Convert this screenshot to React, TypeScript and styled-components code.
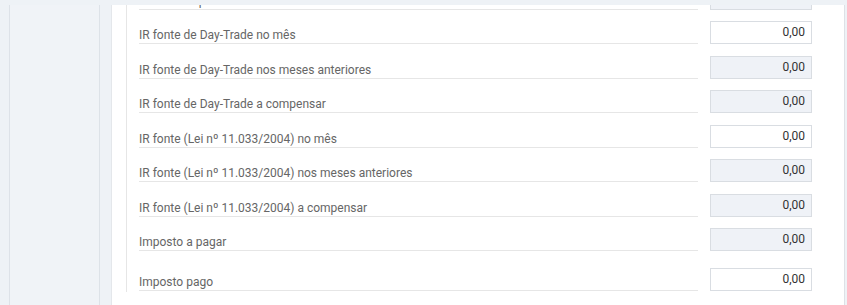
import React from 'react'
import { createGlobalStyle, styled } from 'styled-components'

const GlobalStyle = createGlobalStyle`
  html, body {
    margin: 0;
    padding: 0;
    background: #eef2f6;
    font-family: Roboto, "Liberation Sans", Arial, sans-serif;
  }
`

const Shell = styled.div`
  display: flex;
  height: 305px;
  overflow: hidden;
`

const Rail = styled.div`
  width: 9px;
  flex: none;
  background: #eef2f6;
  border-right: 1px solid #dde2e8;
`

const Sidebar = styled.aside`
  width: 89px;
  flex: none;
  background: #f0f3f7;
  border-right: 1px solid #dde2e8;
`

const Main = styled.main`
  flex: 1;
  display: flex;
  padding: 0 2px 0 11px;
  background: #eef2f6;
`

const TopShade = styled.div`
  position: fixed;
  top: 0;
  left: 0;
  right: 0;
  height: 5px;
  background: #eef2f6;
  z-index: 2;
`

const Card = styled.section`
  flex: 1;
  background: #fff;
  border-left: 1px solid #e4e7eb;
  border-right: 1px solid #dde1e6;
  padding-left: 14px;
  overflow: hidden;
`

const Panel = styled.div`
  height: 100%;
  border-left: 1px solid #e6e6e6;
  padding-left: 12px;
`

const List = styled.div`
  display: flex;
  flex-direction: column;
  gap: 11.5px;
  margin-top: -13.5px;
`

const Row = styled.div<{ $spaced?: boolean }>`
  display: flex;
  align-items: flex-end;
  gap: 12px;
  margin-top: ${(p) => (p.$spaced ? '5.5px' : '0')};
`

const Label = styled.div`
  width: 559px;
  flex: none;
  font-size: 12px;
  line-height: 14px;
  color: #666;
  padding-bottom: 1px;
  border-bottom: 1px solid #e6e6e6;
  white-space: nowrap;
`

const Field = styled.div<{ $readOnly?: boolean }>`
  box-sizing: border-box;
  width: 102px;
  height: 23px;
  flex: none;
  border: 1px solid #d9dde2;
  background: ${(p) => (p.$readOnly ? '#eff2f7' : '#fff')};
  font-size: 12px;
  line-height: 21px;
  color: #333;
  text-align: right;
  padding-right: 6px;
`

const rows: { label: string; readOnly: boolean; spaced?: boolean }[] = [
  { label: 'Total do imposto devido', readOnly: true },
  { label: 'IR fonte de Day-Trade no mês', readOnly: false },
  { label: 'IR fonte de Day-Trade nos meses anteriores', readOnly: true },
  { label: 'IR fonte de Day-Trade a compensar', readOnly: true },
  { label: 'IR fonte (Lei nº 11.033/2004) no mês', readOnly: false },
  { label: 'IR fonte (Lei nº 11.033/2004) nos meses anteriores', readOnly: true },
  { label: 'IR fonte (Lei nº 11.033/2004) a compensar', readOnly: true },
  { label: 'Imposto a pagar', readOnly: true },
  { label: 'Imposto pago', readOnly: false, spaced: true },
]

function App() {
  return (
    <>
      <GlobalStyle />
      <TopShade />
      <Shell>
        <Rail />
        <Sidebar />
        <Main>
          <Card>
            <Panel>
              <List>
                {rows.map((r) => (
                  <Row key={r.label} $spaced={r.spaced}>
                    <Label>{r.label}</Label>
                    <Field $readOnly={r.readOnly}>0,00</Field>
                  </Row>
                ))}
              </List>
            </Panel>
          </Card>
        </Main>
      </Shell>
    </>
  )
}

export default App
